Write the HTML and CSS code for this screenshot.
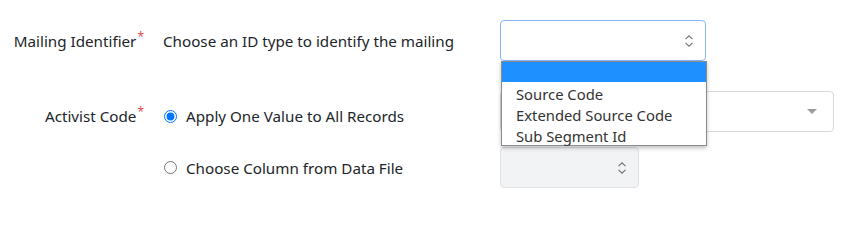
FILE: index.html
```html
<!DOCTYPE html>
<html lang="en">
<head>
<meta charset="utf-8">
<title>Mailing form</title>
<link rel="stylesheet" href="styles.css">
</head>
<body>
<div class="form">
  <div class="row row-mail">
    <div class="lbl">Mailing Identifier<span class="req">*</span></div>
    <div class="desc">Choose an ID type to identify the mailing</div>
    <div class="ctrl">
      <div class="select select-focus">
        <svg class="updown" width="10" height="14" viewBox="0 0 10 14"><path d="M1.5 5.2 L5 1.8 L8.5 5.2 M1.5 8.8 L5 12.2 L8.5 8.8" fill="none" stroke="#6c757d" stroke-width="1.1"/></svg>
        <ul class="menu">
          <li class="hl">&nbsp;</li>
          <li>Source Code</li>
          <li>Extended Source Code</li>
          <li>Sub Segment Id</li>
        </ul>
      </div>
    </div>
  </div>
  <div class="row row-ac">
    <div class="lbl lbl-top">Activist Code<span class="req">*</span></div>
    <label class="opt opt-top"><input type="radio" name="ac" checked><span>Apply One Value to All Records</span></label>
    <div class="ctrl">
      <div class="select select-wide"><span class="caret"></span></div>
    </div>
  </div>
  <div class="row row-col">
    <div></div>
    <label class="opt"><input type="radio" name="ac"><span>Choose Column from Data File</span></label>
    <div class="ctrl">
      <div class="select select-dis">
        <svg class="updown" width="10" height="14" viewBox="0 0 10 14"><path d="M1.5 5.2 L5 1.8 L8.5 5.2 M1.5 8.8 L5 12.2 L8.5 8.8" fill="none" stroke="#6c757d" stroke-width="1.1"/></svg>
      </div>
    </div>
  </div>
</div>
</body>
</html>
```
FILE: styles.css
```css
html, body {
  margin: 0;
  padding: 0;
  background: #ffffff;
}
body {
  font-family: "Noto Sans", "Open Sans", sans-serif;
  font-size: 15.2px;
  color: #212529;
}
.form {
  padding-top: 20px;
}
.row {
  display: grid;
  grid-template-columns: 144px 356px auto;
  height: 41px;
  align-items: center;
}
.row-ac {
  margin-top: 30px;
  align-items: start;
}
.row-col {
  margin-top: 15px;
}
.lbl {
  text-align: right;
  line-height: 24px;
  white-space: nowrap;
}
.lbl-top, .opt-top {
  padding-top: 13px;
}
.req {
  color: #e04a4a;
  font-size: 12px;
  vertical-align: top;
  line-height: 16px;
  margin-left: 1px;
}
.desc {
  padding-left: 19px;
  line-height: 24px;
  white-space: nowrap;
}
.opt {
  display: flex;
  align-items: center;
  gap: 9px;
  padding-left: 20px;
  line-height: 24px;
  white-space: nowrap;
}
.opt input {
  margin: 0;
  width: 13px;
  height: 13px;
  accent-color: #0075ff;
}
.ctrl {
  display: flex;
  align-items: center;
}
.select {
  position: relative;
  box-sizing: border-box;
  height: 41px;
  border: 1px solid #d6d9dd;
  border-radius: 4px;
  background: #fff;
  display: flex;
  align-items: center;
  justify-content: flex-end;
}
.select-focus {
  width: 206px;
  border-color: #86b7fe;
  padding-right: 11px;
}
.select-wide {
  width: 334px;
  padding-right: 16px;
}
.select-dis {
  width: 139px;
  background: #f2f3f5;
  border-color: #dfe1e4;
  padding-right: 11px;
}
.updown {
  display: block;
}
.caret {
  width: 0;
  height: 0;
  border-left: 5px solid transparent;
  border-right: 5px solid transparent;
  border-top: 5px solid #9d9d9d;
}
.menu {
  position: absolute;
  top: 40px;
  left: 0;
  width: 206px;
  box-sizing: border-box;
  margin: 0;
  padding: 0;
  list-style: none;
  background: #fff;
  border: 1px solid #8c8c8c;
  box-shadow: 0 2px 4px rgba(0, 0, 0, 0.25);
  z-index: 10;
  color: #333;
  font-size: 14.8px;
}
.menu li {
  height: 19px;
  padding-top: 2px;
  line-height: 21px;
  padding-left: 14px;
  white-space: nowrap;
}
.menu li.hl {
  height: 20px;
  padding-top: 0;
  background: #1e90ff;
}
```
